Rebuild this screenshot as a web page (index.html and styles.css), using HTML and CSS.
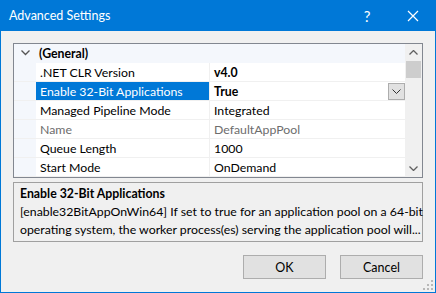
FILE: index.html
```html
<!DOCTYPE html>
<html lang="en">
<head>
    <meta charset="UTF-8">
    <title>Advanced Settings</title>
    <link rel="stylesheet" href="styles.css">
</head>
<body>
    <div class="window">
        <div class="titlebar">
            <span class="title">Advanced Settings</span>
            <span class="tb-btn help">?</span>
            <span class="tb-btn close">
                <svg width="12" height="12" viewBox="0 0 12 12"><path d="M1 1 L11 11 M11 1 L1 11" stroke="#fff" stroke-width="1.2" fill="none"/></svg>
            </span>
        </div>

        <div class="content">
            <div class="grid">
                <div class="rows">
                    <div class="row category">
                        <div class="margin">
                            <svg width="9" height="6" viewBox="0 0 9 6"><path d="M0.5 0.5 L4.5 4.5 L8.5 0.5" stroke="#555" stroke-width="1.3" fill="none"/></svg>
                        </div>
                        <div class="cat-label">(General)</div>
                    </div>
                    <div class="row">
                        <div class="margin"></div>
                        <div class="name">.NET CLR Version</div>
                        <div class="value bold">v4.0</div>
                    </div>
                    <div class="row selected">
                        <div class="margin"></div>
                        <div class="name">Enable 32-Bit Applications</div>
                        <div class="value bold">
                            True
                            <span class="drop">
                                <svg width="9" height="5" viewBox="0 0 9 5"><path d="M0.5 0.5 L4.5 4.5 L8.5 0.5" stroke="#333" stroke-width="1" fill="none"/></svg>
                            </span>
                        </div>
                    </div>
                    <div class="row">
                        <div class="margin"></div>
                        <div class="name">Managed Pipeline Mode</div>
                        <div class="value">Integrated</div>
                    </div>
                    <div class="row readonly">
                        <div class="margin"></div>
                        <div class="name">Name</div>
                        <div class="value">DefaultAppPool</div>
                    </div>
                    <div class="row">
                        <div class="margin"></div>
                        <div class="name">Queue Length</div>
                        <div class="value">1000</div>
                    </div>
                    <div class="row">
                        <div class="margin"></div>
                        <div class="name">Start Mode</div>
                        <div class="value">OnDemand</div>
                    </div>
                </div>
                <div class="scrollbar">
                    <div class="arrow">
                        <svg width="9" height="5" viewBox="0 0 9 5"><path d="M0.5 4.5 L4.5 0.5 L8.5 4.5" stroke="#606060" stroke-width="1.3" fill="none"/></svg>
                    </div>
                    <div class="thumb"></div>
                    <div class="track"></div>
                    <div class="arrow">
                        <svg width="9" height="5" viewBox="0 0 9 5"><path d="M0.5 0.5 L4.5 4.5 L8.5 0.5" stroke="#606060" stroke-width="1.3" fill="none"/></svg>
                    </div>
                </div>
            </div>

            <div class="description">
                <div class="desc-title">Enable 32-Bit Applications</div>
                <div class="desc-text">[enable32BitAppOnWin64] If set to true for an application pool on a 64-bit<br>operating system, the worker process(es) serving the application pool will...</div>
            </div>

            <div class="buttons">
                <button class="button">OK</button>
                <button class="button">Cancel</button>
            </div>
        </div>

        <svg class="grip" width="10" height="10" viewBox="0 0 10 10">
            <rect x="8" y="0" width="2" height="2" fill="#b8b8b8"/>
            <rect x="4" y="4" width="2" height="2" fill="#b8b8b8"/>
            <rect x="8" y="4" width="2" height="2" fill="#b8b8b8"/>
            <rect x="0" y="8" width="2" height="2" fill="#b8b8b8"/>
            <rect x="4" y="8" width="2" height="2" fill="#b8b8b8"/>
            <rect x="8" y="8" width="2" height="2" fill="#b8b8b8"/>
        </svg>
    </div>
</body>
</html>
```

FILE: styles.css
```css
body {
    margin: 0;
    font-family: "Lato", "Noto Sans", sans-serif;
    font-size: 12.3px;
    color: #000;
}

.window {
    position: relative;
    width: 434px;
    height: 292px;
    border: 1px solid #0078d7;
    border-top: none;
    background: #f0f0f0;
}

.titlebar {
    display: flex;
    align-items: center;
    height: 31px;
    margin: 0 -1px;
    background: #0078d7;
    color: #fff;
}

.title {
    flex: 1;
    padding-left: 9px;
    font-size: 12.5px;
}

.tb-btn {
    display: flex;
    align-items: center;
    justify-content: center;
    width: 46px;
    height: 31px;
    font-size: 15px;
}

.content {
    padding: 12px 12px 0 12px;
}

.grid {
    display: flex;
    height: 133px;
    border: 1px solid #828790;
    background: #fff;
}

.rows {
    flex: 1;
}

.row {
    display: flex;
    height: 18px;
    line-height: 20px;
    border-bottom: 1px solid #f0f0f0;
}

.margin {
    display: flex;
    align-items: center;
    justify-content: center;
    width: 22px;
    background: #f4f7fc;
}

.category {
    background: #f4f7fc;
    border-bottom-color: #f4f7fc;
}

.cat-label {
    padding-left: 3px;
    font-weight: bold;
}

.name {
    width: 169px;
    padding-left: 4px;
    border-right: 1px solid #f0f0f0;
    white-space: nowrap;
    overflow: hidden;
}

.value {
    flex: 1;
    display: flex;
    align-items: center;
    padding-left: 4px;
    padding-top: 2px;
}

.bold {
    font-weight: bold;
}

.selected .name {
    background: #0078d7;
    color: #fff;
}

.readonly .name,
.readonly .value {
    color: #6d6d6d;
}

.drop {
    display: flex;
    align-items: center;
    justify-content: center;
    width: 15px;
    height: 15px;
    margin-left: auto;
    margin-top: -2px;
    border: 1px solid #adadad;
    background: #e1e1e1;
}

.scrollbar {
    display: flex;
    flex-direction: column;
    width: 17px;
    background: #f0f0f0;
}

.arrow {
    display: flex;
    align-items: center;
    justify-content: center;
    height: 17px;
}

.thumb {
    height: 17px;
    margin: 0 1px;
    background: #cdcdcd;
}

.track {
    flex: 1;
}

.description {
    height: 56px;
    margin-top: 4px;
    padding: 1px 6px;
    border: 1px solid #a0a0a0;
    background: #f0f0f0;
}

.desc-title {
    font-weight: bold;
    line-height: 18px;
    margin-top: 1px;
}

.desc-text {
    line-height: 18px;
    white-space: nowrap;
}

.buttons {
    display: flex;
    justify-content: flex-end;
    gap: 14px;
    margin-top: 13px;
}

.button {
    width: 83px;
    height: 24px;
    font-family: inherit;
    font-size: 12.5px;
    border: 1px solid #adadad;
    background: #e1e1e1;
    color: #000;
    padding: 0;
}

.grip {
    position: absolute;
    right: 2px;
    bottom: 2px;
}
```
